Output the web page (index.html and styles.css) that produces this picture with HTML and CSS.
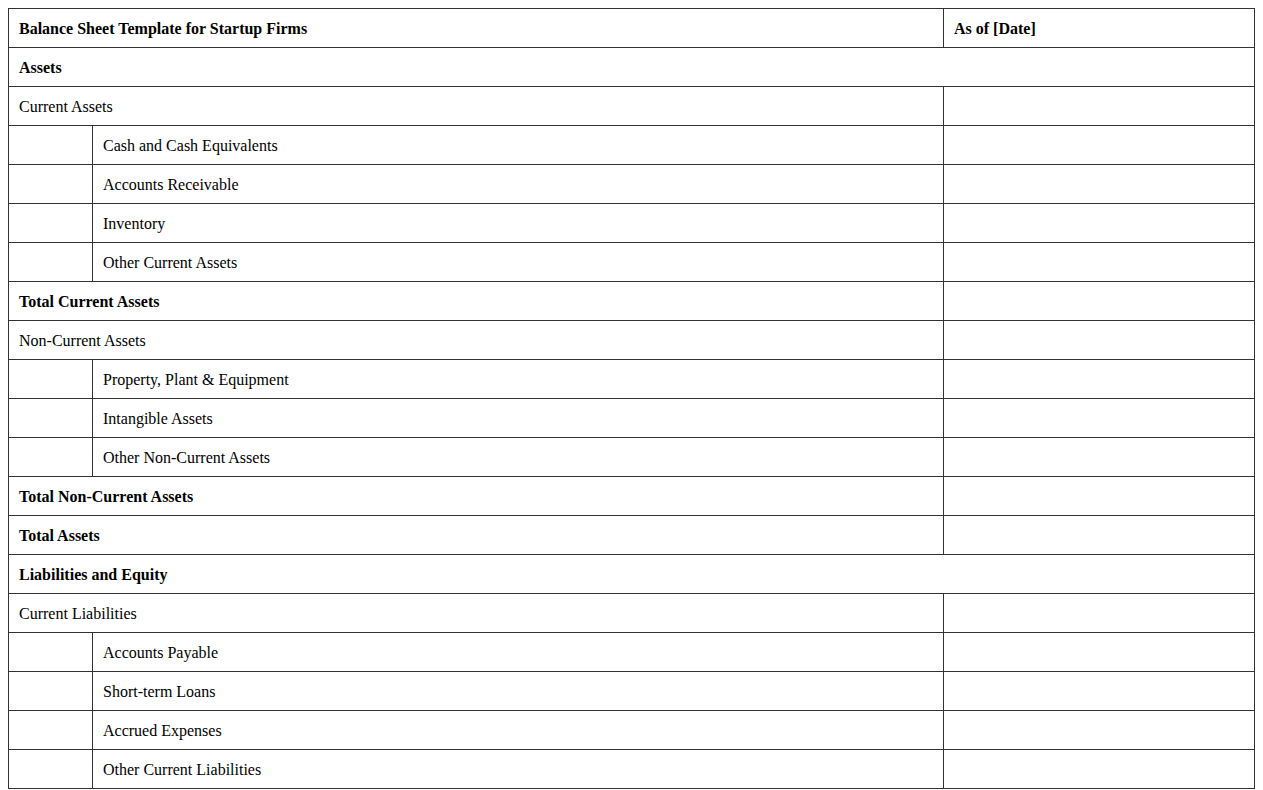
FILE: index.html
```html
<!DOCTYPE html>
<html>
<head>
<meta charset="utf-8">
<link rel="stylesheet" href="styles.css">
</head>
<body>
<table class="sheet">
  <colgroup>
    <col class="c-indent">
    <col class="c-label">
    <col class="c-value">
  </colgroup>
  <tr><th colspan="2">Balance Sheet Template for Startup Firms</th><th>As of [Date]</th></tr>
  <tr><td colspan="3" class="b">Assets</td></tr>
  <tr><td colspan="2">Current Assets</td><td></td></tr>
  <tr><td></td><td>Cash and Cash Equivalents</td><td></td></tr>
  <tr><td></td><td>Accounts Receivable</td><td></td></tr>
  <tr><td></td><td>Inventory</td><td></td></tr>
  <tr><td></td><td>Other Current Assets</td><td></td></tr>
  <tr><td colspan="2" class="b">Total Current Assets</td><td></td></tr>
  <tr><td colspan="2">Non-Current Assets</td><td></td></tr>
  <tr><td></td><td>Property, Plant &amp; Equipment</td><td></td></tr>
  <tr><td></td><td>Intangible Assets</td><td></td></tr>
  <tr><td></td><td>Other Non-Current Assets</td><td></td></tr>
  <tr><td colspan="2" class="b">Total Non-Current Assets</td><td></td></tr>
  <tr><td colspan="2" class="b">Total Assets</td><td></td></tr>
  <tr><td colspan="3" class="b">Liabilities and Equity</td></tr>
  <tr><td colspan="2">Current Liabilities</td><td></td></tr>
  <tr><td></td><td>Accounts Payable</td><td></td></tr>
  <tr><td></td><td>Short-term Loans</td><td></td></tr>
  <tr><td></td><td>Accrued Expenses</td><td></td></tr>
  <tr><td></td><td>Other Current Liabilities</td><td></td></tr>
</table>
</body>
</html>
```
FILE: styles.css
```css
html, body {
  margin: 0;
  background: #fff;
}
body {
  padding: 8px;
  font-family: "Liberation Serif", "Times New Roman", serif;
  font-size: 16px;
  color: #000;
}
.sheet {
  width: 100%;
  border-collapse: collapse;
  table-layout: fixed;
}
.c-indent { width: 84px; }
.c-value { width: 311px; }
.sheet th,
.sheet td {
  border: 1px solid #333;
  padding: 11px 10px 9px;
  height: 18px;
  line-height: 18px;
  text-align: left;
  vertical-align: middle;
}
.sheet th,
.sheet .b {
  font-weight: bold;
}
```
